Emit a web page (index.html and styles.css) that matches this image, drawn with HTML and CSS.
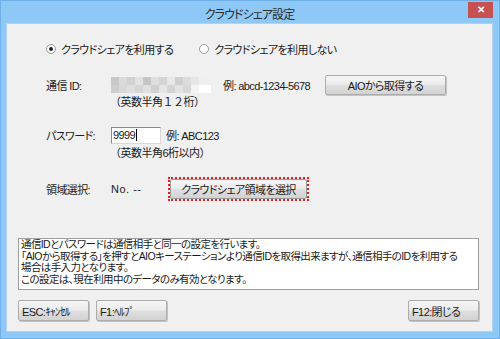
FILE: index.html
```html
<!DOCTYPE html>
<html lang="ja">
<head>
    <meta charset="UTF-8">
    <title>クラウドシェア設定</title>
    <link rel="stylesheet" href="styles.css">
</head>
<body>
    <div class="window">
        <div class="title-bar">
            <span></span>
            <span class="title">クラウドシェア設定</span>
            <span class="close-btn">✕</span>
        </div>
        <div class="client">
            <div class="radio-row">
                <label class="radio"><span class="radio-dot checked"></span>クラウドシェアを利用する</label>
                <label class="radio"><span class="radio-dot"></span>クラウドシェアを利用しない</label>
            </div>

            <div class="field-row id-row">
                <span class="field-label">通信 ID:</span>
                <div class="mosaic">
                    <div class="mosaic-top"></div>
                    <div class="mosaic-bottom"></div>
                </div>
                <span class="example">例: abcd-1234-5678</span>
                <button class="btn get-btn">AIOから取得する</button>
            </div>
            <div class="hint">（英数半角１２桁）</div>

            <div class="field-row pass-row">
                <span class="field-label">パスワード:</span>
                <div class="text-input">9999<span class="caret"></span></div>
                <span class="example">例: ABC123</span>
            </div>
            <div class="hint">（英数半角6桁以内）</div>

            <div class="field-row area-row">
                <span class="field-label">領域選択:</span>
                <span class="area-no">No. --</span>
                <div class="focus-ring">
                    <button class="btn area-btn">クラウドシェア領域を選択</button>
                </div>
            </div>

            <div class="info-box">
                通信IDとパスワードは通信相手と同一の設定を行います。<br>
                「AIOから取得する」を押すとAIOキーステーションより通信IDを取得出来ますが、通信相手のIDを利用する<br>
                場合は手入力となります。<br>
                この設定は、現在利用中のデータのみ有効となります。
            </div>

            <div class="footer">
                <button class="btn foot-btn">ESC:ｷｬﾝｾﾙ</button>
                <button class="btn foot-btn">F1:ﾍﾙﾌﾟ</button>
                <span class="spacer"></span>
                <button class="btn foot-btn">F12:閉じる</button>
            </div>
        </div>
    </div>
</body>
</html>
```

FILE: styles.css
```css
* {
    margin: 0;
    padding: 0;
    box-sizing: border-box;
    font-family: 'Liberation Sans', 'Noto Sans CJK JP', sans-serif;
    font-feature-settings: "palt";
}

body {
    width: 500px;
    height: 339px;
    overflow: hidden;
    background: #f0f0f0;
}

.window {
    width: 500px;
    height: 339px;
    background: #8ec8f6;
    border: 1px solid #6fb0e8;
    display: flex;
    flex-direction: column;
    padding: 0 6px 6px 5px;
}

.title-bar {
    height: 22px;
    display: grid;
    grid-template-columns: 1fr auto 1fr;
    align-items: center;
}

.title {
    font-size: 12px;
    letter-spacing: -0.9px;
    color: #2c2c2c;
    padding-top: 3px;
}

.close-btn {
    justify-self: end;
    align-self: start;
    width: 25px;
    height: 16px;
    margin-top: 1px;
    background: #c75050;
    color: #fff;
    font-size: 10px;
    font-weight: bold;
    text-align: center;
    line-height: 16px;
}

.client {
    flex: 1;
    background: #f0f0f0;
    border: 1px solid #b4d2ee;
    font-size: 11px;
    letter-spacing: -0.6px;
    color: #1a1a1a;
    padding: 0 11px;
    display: flex;
    flex-direction: column;
    white-space: nowrap;
}

.radio-row {
    display: flex;
    gap: 26px;
    margin: 17px 0 0 28px;
    height: 16px;
    align-items: center;
}

.radio {
    display: flex;
    align-items: center;
    gap: 5px;
}

.radio-dot {
    width: 10px;
    height: 10px;
    border-radius: 50%;
    background: #fff;
    border: 1px solid #9a9a9a;
    display: flex;
    align-items: center;
    justify-content: center;
}

.radio-dot.checked::after {
    content: '';
    width: 4px;
    height: 4px;
    border-radius: 50%;
    background: #222;
}

.field-row {
    display: flex;
    align-items: center;
}

.field-label {
    width: 65px;
    margin-left: 28px;
}

.id-row {
    margin-top: 18px;
    height: 20px;
}

.mosaic {
    width: 100px;
    height: 16px;
    display: flex;
    flex-direction: column;
}

.mosaic-top,
.mosaic-bottom {
    flex: 1;
}

.mosaic-top {
    background: linear-gradient(to right,
        #c8c8c8 0 8px, #dadada 8px 16px, #d2d2d2 16px 24px, #e2e2e2 24px 32px,
        #c6c6c6 32px 40px, #dedede 40px 48px, #d4d4d4 48px 56px, #e8e8e8 56px 64px,
        #cfcfcf 64px 72px, #dcdcdc 72px 80px, #e6e6e6 80px 88px, #efefef 88px 100px);
}

.mosaic-bottom {
    background: linear-gradient(to right,
        #cdcdcd 0 8px, #d8d8d8 8px 16px, #dedede 16px 24px, #d6d6d6 24px 32px,
        #e0e0e0 32px 40px, #d0d0d0 40px 48px, #e4e4e4 48px 56px, #d4d4d4 56px 64px,
        #e2e2e2 64px 72px, #d8d8d8 72px 80px, #f4f4f4 80px 88px, #ffffff 88px 100px);
}

.example {
    margin-left: 12px;
}

.id-row .example {
    width: 102px;
}

.btn {
    font-size: 11px;
    letter-spacing: -0.6px;
    white-space: nowrap;
    color: #1a1a1a;
    background: linear-gradient(#f6f6f6, #ececec 45%, #dedede 55%, #d3d3d3);
    border: 1px solid #acacac;
    border-radius: 2px;
    box-shadow: 1px 1px 0 #c4c4c4;
}

.get-btn {
    width: 121px;
    height: 20px;
}

.hint {
    margin-left: 92px;
    height: 14px;
    line-height: 14px;
    font-feature-settings: normal;
    letter-spacing: -0.5px;
}

.pass-row {
    margin-top: 17px;
    height: 18px;
}

.text-input {
    width: 50px;
    height: 17px;
    background: #fff;
    border: 1px solid #d8d8d8;
    border-top-color: #8a8a8a;
    border-left-color: #8a8a8a;
    padding-left: 1px;
    line-height: 15px;
    display: flex;
    align-items: center;
}

.caret {
    width: 1px;
    height: 12px;
    margin-left: 1px;
    background: #000;
}

.pass-row .example {
    margin-left: 5px;
}

.pass-row + .hint {
    margin-top: 2px;
}

.area-row {
    margin-top: 16px;
    height: 25px;
}

.area-no {
    width: 57px;
    letter-spacing: 0.5px;
}

.focus-ring {
    border: 2px dotted #e02020;
    height: 24px;
    width: 141px;
}

.area-btn {
    width: 100%;
    height: 100%;
    border-color: #9a9a9a;
    box-shadow: none;
}

.info-box {
    margin-top: 37px;
    width: 461px;
    height: 52px;
    background: #fff;
    border: 1px solid #a0a0a0;
    padding: 0 2px;
    line-height: 11.5px;
    font-size: 10.5px;
    letter-spacing: -0.6px;
}

.footer {
    display: flex;
    gap: 7px;
    margin-top: 10px;
    width: 461px;
}

.spacer {
    flex: 1;
}

.foot-btn {
    width: 71px;
    height: 21px;
    text-align: left;
    padding-left: 3px;
}
```
